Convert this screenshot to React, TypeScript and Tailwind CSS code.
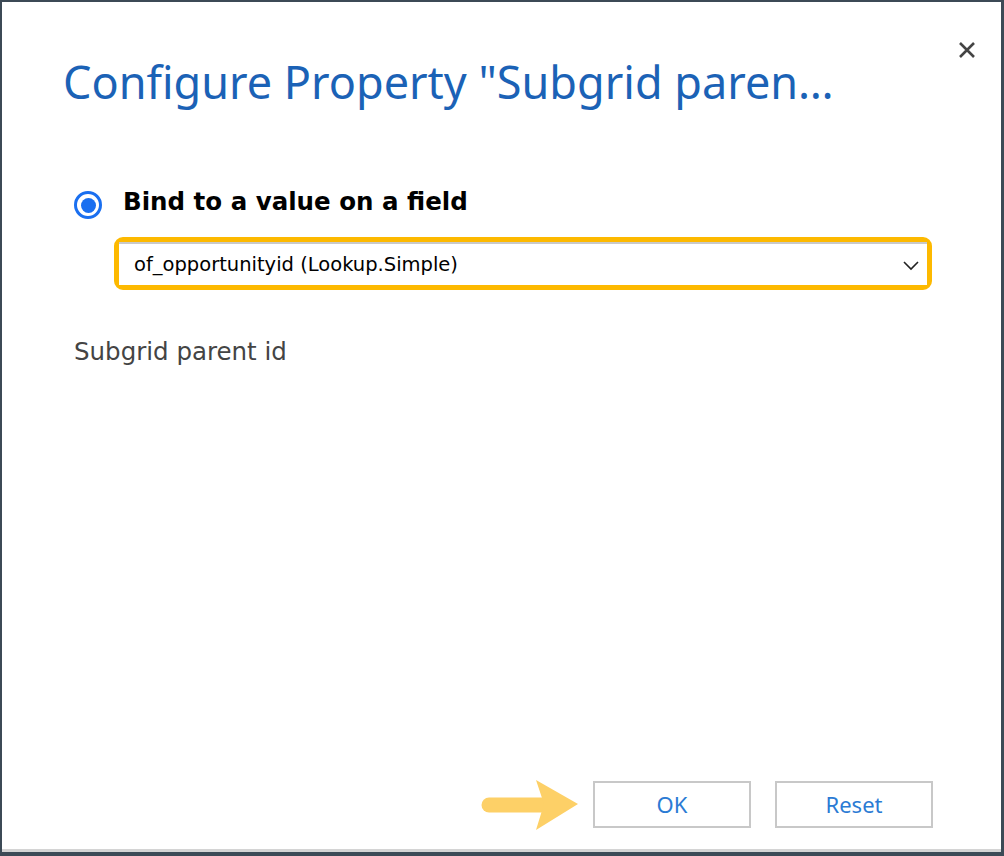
export default function App() {
  return (
    <div className="w-[1004px] h-[856px] bg-[#3c4a56] pt-[2px] pl-[2px] pr-[3px] pb-[4px]">
      <div className="h-full flex flex-col bg-white border-b-[3px] border-[#d4d4d4] relative">
        {/* Close */}
        <button className="absolute right-[24px] top-[38px] text-[#444]">
          <svg width="20" height="20" viewBox="0 0 20 20">
            <path d="M3 3 L17 17 M17 3 L3 17" stroke="currentColor" strokeWidth="2.6" />
          </svg>
        </button>

        {/* Title */}
        <h1 className="pl-[61px] pt-[52px] text-[45px] leading-[56px] text-[#1b62b6] font-['Noto_Sans',sans-serif]">
          Configure Property "Subgrid paren…
        </h1>

        {/* Binding option */}
        <div className="mt-[77px] pl-[72px] flex items-start gap-[21px]">
          <span className="mt-[4px] w-[28px] h-[28px] rounded-full border-[3px] border-[#1a6ff0] flex items-center justify-center">
            <span className="w-[15px] h-[15px] rounded-full bg-[#1a6ff0]" />
          </span>
          <span className="text-[24.5px] leading-[30px] font-bold text-black font-['DejaVu_Sans',sans-serif]">
            Bind to a value on a field
          </span>
        </div>

        <div className="mt-[18px] ml-[112px] w-[818px] h-[53px] rounded-[9px] border-[5px] border-[#fdb900]">
          <div className="h-full bg-white border-t-2 border-[#c9c9c9] flex items-center justify-between pl-[15px] pr-[7px]">
            <span className="text-[19.5px] text-black font-['DejaVu_Sans',sans-serif]">
              of_opportunityid (Lookup.Simple)
            </span>
            <svg width="18" height="12" viewBox="0 0 18 12" className="text-[#222]">
              <path d="M2 3 L9 10 L16 3" fill="none" stroke="currentColor" strokeWidth="1.6" />
            </svg>
          </div>
        </div>

        <p className="mt-[47px] pl-[72px] text-[24.5px] leading-[30px] text-[#444] font-['DejaVu_Sans',sans-serif]">
          Subgrid parent id
        </p>

        {/* Footer */}
        <div className="mt-auto mb-[19px] flex items-center justify-end pr-[68px] gap-[24px]">
          <svg width="102" height="52" viewBox="0 0 102 52" className="mr-[-12px]">
            <path d="M10 27 H66" stroke="#fdd067" strokeWidth="15" strokeLinecap="round" />
            <path d="M57 2 L99 26 L57 52 L65 26 Z" fill="#fdd067" />
          </svg>
          <button className="w-[158px] h-[47px] border-2 border-[#c8c8c8] text-[22px] text-[#2b7bd4] font-['Noto_Sans',sans-serif]">
            OK
          </button>
          <button className="w-[158px] h-[47px] border-2 border-[#c8c8c8] text-[22px] text-[#2b7bd4] font-['Noto_Sans',sans-serif]">
            Reset
          </button>
        </div>
      </div>
    </div>
  );
}
